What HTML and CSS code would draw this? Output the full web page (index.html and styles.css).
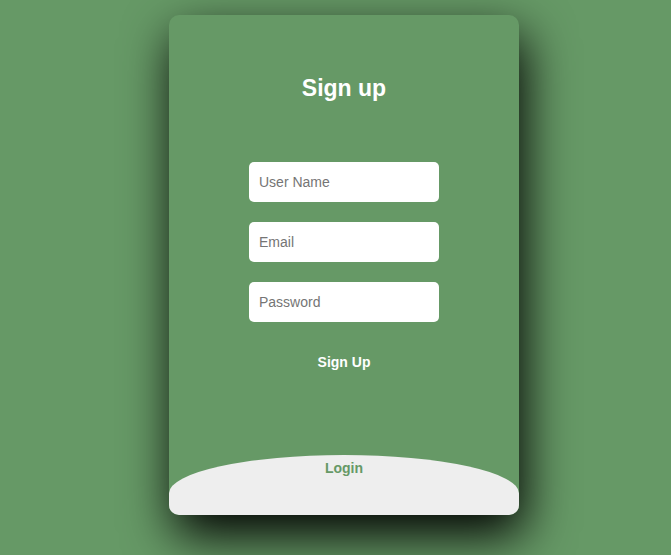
FILE: index.html
```html
<!DOCTYPE html>
<html>
<head>
<meta charset="utf-8">
<link rel="stylesheet" href="styles.css">
</head>
<body>
<div class="main">
  <div class="signup">
    <h1 class="title">Sign up</h1>
    <form class="form">
      <input class="field" type="text" placeholder="User Name">
      <input class="field" type="email" placeholder="Email">
      <input class="field" type="password" placeholder="Password">
      <button class="btn" type="button">Sign Up</button>
    </form>
  </div>
  <div class="login">
    <span class="login-label">Login</span>
  </div>
</div>
</body>
</html>
```
FILE: styles.css
```css
html, body {
  margin: 0;
  padding: 0;
}
body {
  background: #669966;
  font-family: "Liberation Sans", Arial, sans-serif;
  height: 555px;
  overflow: hidden;
}
.main {
  width: 350px;
  height: 500px;
  margin: 15px 0 0 169px;
  background: #669966;
  border-radius: 10px;
  box-shadow: 5px 20px 50px #000;
  overflow: hidden;
}
.signup {
  height: 440px;
  display: flex;
  flex-direction: column;
  align-items: center;
}
.title {
  margin: 60px 0 0;
  color: #fff;
  font-size: 23px;
  font-weight: bold;
  line-height: 26px;
}
.form {
  margin-top: 61px;
  display: flex;
  flex-direction: column;
  align-items: center;
  gap: 20px;
}
.field {
  box-sizing: border-box;
  width: 190px;
  height: 40px;
  padding: 0 10px;
  border: none;
  border-radius: 5px;
  background: #fff;
  font-family: "Liberation Sans", Arial, sans-serif;
  font-size: 14px;
  outline: none;
}
.field::placeholder {
  color: #757575;
}
.btn {
  width: 190px;
  height: 40px;
  border: none;
  background: #669966;
  color: #fff;
  font-family: "Liberation Sans", Arial, sans-serif;
  font-size: 14px;
  font-weight: bold;
  padding: 0;
}
.login {
  height: 460px;
  background: #eee;
  border-radius: 60% / 10%;
  display: flex;
  justify-content: center;
  padding-top: 5px;
  box-sizing: border-box;
}
.login-label {
  color: #669966;
  font-size: 14px;
  font-weight: bold;
  line-height: 16px;
}
```
